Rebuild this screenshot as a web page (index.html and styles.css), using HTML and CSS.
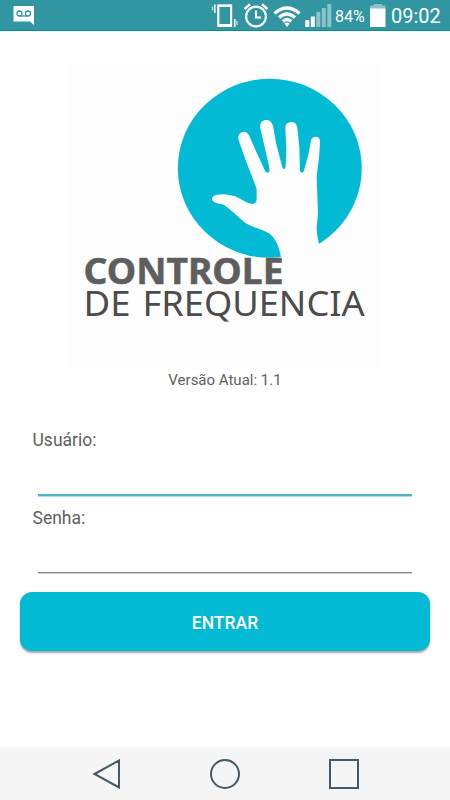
FILE: index.html
```
<!DOCTYPE html>
<html lang="pt-BR">
	<head>
		<meta charset="UTF-8" />
		<meta name="viewport" content="width=device-width, initial-scale=1.0" />
		<title>Controle de Frequencia</title>
		<link rel="stylesheet" href="styles.css">
	</head>
	<body>
		<header class="status-bar">
			<svg class="voicemail" width="22" height="20" viewBox="0 0 22 20">
				<path d="M.5 0H21v19l-4-3.500H.5z" fill="#fff" />
				<g fill="none" stroke="#3296a2" stroke-width="1.300">
					<circle cx="6.500" cy="7.500" r="2.500" />
					<circle cx="15" cy="7.500" r="2.500" />
					<path d="M6.500 10H15" />
				</g>
			</svg>
			<!-- vibrate, alarm, wifi, signal -->
			<svg width="122" height="30" viewBox="0 0 122 30">
				<path d="M8.300 5.700h12.800v20H8.300z" fill="none" stroke="#fff" stroke-width="2.200" />
				<path d="M8 4.700h14v2H8zM8 24h14v2.800H8z" fill="#fff" />
				<path d="M4.800 4.500v8.500M24.800 19v8" stroke="#fff" stroke-width="1.500" />
				<path d="M2.500 6.500v4M27 21v4" stroke="#fff" stroke-width="1.300" opacity=".7" />
				<g fill="none" stroke="#fff" stroke-width="2.100">
					<circle cx="46" cy="16.500" r="9.900" />
					<path d="M46 10.500v7h5" />
					<path d="M34.500 9l5.500-4.700M57.500 9L52 4.300" stroke-width="2.500" />
				</g>
				<g fill="none" stroke="#fff" stroke-width="3.200">
					<path d="M64.500 13.500Q77 2.500 89.500 13.500" />
					<path d="M69 17.500Q77 10.500 85 17.500" />
					<path d="M72.800 21.500Q77 17.500 81.200 21.500" />
				</g>
				<path d="M74.300 23.500Q77 21.500 79.700 23.500L77 27z" fill="#fff" />
				<path d="M95.300 20h4v7h-4zM100.800 16.500h4V27h-4z" fill="#fff" />
				<path d="M106.300 12h4v15h-4zM111.800 8h4v19h-4zM117.300 4h4v23h-4z" fill="#8cc3ca" />
			</svg>
			<span class="battery-level">84%</span>
			<svg class="battery" width="16" height="30" viewBox="0 0 16 30">
				<path d="M0 5.500h4V4h8v1.500h3.500v4H0z" fill="#8cc3ca" />
				<path d="M0 8.500h15.500V27H0z" fill="#fff" />
			</svg>
			<span class="clock">09:02</span>
		</header>

		<main class="login">
			<svg class="logo" width="310" height="305" viewBox="0 0 310 305">
				<ellipse cx="199.800" cy="104.300" rx="92" ry="89.500" fill="#03bad5" />
				<path class="hand" transform="translate(95 6) scale(.33333)" d="M348 568C346 536 334 508 314 491C292 478 262 472 240 458C216 437 198 419 176 404C164 402 147 400 142 391C139 381 146 375 157 374L178 373C190 376 200 376 211 379C230 388 245 400 260 402C270 401 275 396 275 386L275 358C266 328 254 302 245 278L222 214C217 200 221 188 233 186C242 184 250 189 254 200L274 246L299 300C303 310 311 310 314 302C312 283 306 264 302 244L287 180C283 163 287 152 302 150C313 148 321 156 324 168L334 223L352 292C355 299 361 298 362 290L364 238L361 174C361 162 369 156 380 156C390 156 396 164 397 174L403 230L405 302C407 310 413 310 417 302L430 254L438 212C441 202 448 199 456 201C464 203 465 210 465 218L462 264L455 318L457 374L459 430L455 474C455 491 459 507 462 522L425 570Z" />
				<text class="logo-top" x="13.500" y="219.800" textLength="200" lengthAdjust="spacingAndGlyphs">CONTROLE</text>
				<text class="logo-bottom" x="13.500" y="252" textLength="47" lengthAdjust="spacingAndGlyphs">DE</text>
				<text class="logo-bottom" x="72.500" y="252" textLength="222.200" lengthAdjust="spacingAndGlyphs">FREQUENCIA</text>
			</svg>
			<p class="version">Versão Atual: 1.1</p>

			<form class="form">
				<label for="user">Usuário:</label>
				<input class="focused" type="text" id="user" />
				<label for="password">Senha:</label>
				<input type="password" id="password" />
				<button type="button">ENTRAR</button>
			</form>
		</main>

		<nav class="nav-bar">
			<svg width="30" height="32" viewBox="0 0 30 32">
				<path d="M2.500 16L27 2.500v27z" />
			</svg>
			<svg width="32" height="32" viewBox="0 0 32 32">
				<circle cx="16" cy="16" r="14" />
			</svg>
			<svg width="32" height="32" viewBox="0 0 32 32">
				<path d="M2 2h28v28H2z" />
			</svg>
		</nav>
	</body>
</html>
```
FILE: styles.css
```
* {
	box-sizing: border-box;
}
body {
	margin: 0;
	height: 800px;
	display: flex;
	flex-direction: column;
	background-color: #fff;
	color: #606060;
	font-family: Roboto, sans-serif;
	overflow: hidden;
}
.status-bar {
	display: flex;
	height: 31px;
	background-color: #3296a2;
	border-bottom: 1px solid #078b98;
	color: #fff;
	line-height: 33px;
}
.voicemail {
	margin: 6px 175px 0 13px;
}
.battery-level {
	width: 35px;
	margin-left: 3px;
	font-size: 16px;
}
.battery {
	margin-right: 5px;
}
.clock {
	font-size: 20px;
}
.login {
	flex: 1;
	display: flex;
	flex-direction: column;
	align-items: center;
	padding-top: 33px;
}
.logo {
	background-color: #fdfdfd;
}
.hand {
	fill: #fdfdfd;
}
.logo-top,
.logo-bottom {
	font-family: "Noto Sans", sans-serif;
}
.logo-top {
	font-size: 35.5px;
	font-weight: bold;
	fill: #5e5e5e;
	stroke: #5e5e5e;
	stroke-width: 0.5;
}
.logo-bottom {
	font-size: 35px;
	fill: #4c4c4c;
}
.version {
	margin: 1px 0 0;
	font-size: 15px;
	line-height: 20px;
}
.form {
	width: 410px;
	margin-top: 39px;
	display: flex;
	flex-direction: column;
}
.form label {
	margin-left: 12.5px;
	font-size: 17.5px;
	line-height: 22px;
}
.form input {
	height: 44px;
	margin: 0 18px 10px;
	padding: 0 4px;
	border: 0;
	border-bottom: 1px solid #858585;
	background: none;
	box-shadow: 0 1px 0 #d4d4d4;
	font: inherit;
	outline: none;
}
.form input.focused {
	height: 45px;
	margin-bottom: 11px;
	border-bottom: 2px solid #4eb5bf;
	box-shadow: 0 1px 0 #a5e2e9;
}
.form button {
	height: 59px;
	margin-top: 9px;
	padding-top: 3px;
	border: 0;
	border-radius: 12px;
	background-color: #03bad5;
	box-shadow: 0 2px 2px rgba(0, 0, 0, 0.35);
	color: #fff;
	font-family: inherit;
	font-size: 17.5px;
	font-weight: 500;
}
.nav-bar {
	display: flex;
	justify-content: center;
	align-items: center;
	gap: 87px;
	height: 53px;
	padding-left: 1px;
	background-color: #f5f5f5;
}
.nav-bar svg {
	fill: none;
	stroke: #455a64;
	stroke-width: 2;
}
```
